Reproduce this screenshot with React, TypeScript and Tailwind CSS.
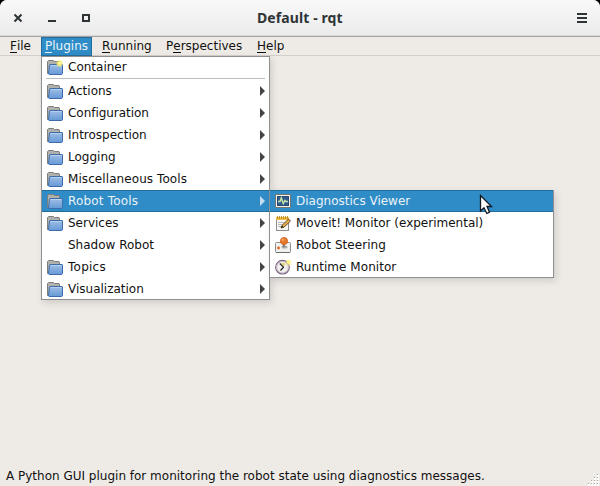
import type { ReactNode } from "react";

function FolderIcon({ fresh }: { fresh?: boolean }) {
  return (
    <svg width="16" height="16" viewBox="0 0 16 16">
      <defs>
        <linearGradient id="folder" x1="0" y1="0" x2="0" y2="1">
          <stop offset="0" stopColor="#a0bfe6" />
          <stop offset="1" stopColor="#6699d6" />
        </linearGradient>
        <radialGradient id="glow">
          <stop offset="0" stopColor="#ffffe0" />
          <stop offset="0.4" stopColor="#f8ed65" />
          <stop offset="1" stopColor="#f0df50" stopOpacity="0" />
        </radialGradient>
      </defs>
      <path d="M.5 14.5V2.5L1.5 1.5H6.5L7.5 2.5H12L12.5 3V14.5Z" fill="#b0b1ac" stroke="#7d7e7a" />
      <path d="M3 5.5H15.2L15.5 6V14.5L14.8 15.5H2L1.5 14.5L2.5 6Z" fill="url(#folder)" stroke="#3c6cac" />
      <path d="M3.6 6.5H14.5" stroke="#b9d0ec" />
      {fresh && <circle cx="12.5" cy="4.5" r="4" fill="url(#glow)" />}
    </svg>
  );
}

function DiagnosticsIcon() {
  return (
    <svg width="16" height="16" viewBox="0 0 16 16">
      <rect x=".5" y="1.5" width="15" height="13" rx=".5" fill="#f5f4ee" stroke="#77756b" />
      <rect x="2.5" y="3.5" width="11" height="9" fill="#315b8c" stroke="#254972" />
      <path d="M3 8.5H5L6.3 5L8.3 10.5L10 7.5L11 8.5H13" fill="none" stroke="#c4e2a8" strokeWidth="1.5" />
    </svg>
  );
}

function NotepadIcon() {
  return (
    <svg width="16" height="16" viewBox="0 0 16 16">
      <rect x="1.5" y="2.5" width="12" height="13" fill="#f7f7f5" stroke="#8c8c88" />
      <rect x="1" y="2" width="13" height="3" fill="#f1c34a" />
      <path d="M2.5 1V4M4.5 1V4M6.5 1V4M8.5 1V4M10.5 1V4M12.5 1V4" stroke="#b97b18" strokeWidth=".8" />
      <path d="M3 7.5H9M3 9.5H7M3 11.5H6" stroke="#b8b8b8" />
      <path d="M6 13L7 10.4L13.5 4L15.5 6L9 12.2Z" fill="#e5ad49" stroke="#594020" strokeWidth=".9" />
      <path d="M6 13L7 10.6L8.5 12Z" fill="#222" />
    </svg>
  );
}

function SteeringIcon() {
  return (
    <svg width="16" height="16" viewBox="0 0 16 16">
      <rect x=".5" y="5.5" width="15" height="10" rx="1" fill="#f1f1ef" stroke="#8d8d89" />
      <path d="M1 15.5H15" stroke="#6d6d69" />
      <ellipse cx="9.5" cy="10" rx="3" ry="1.6" fill="#aaa" />
      <path d="M8.8 5V10" stroke="#777" strokeWidth="2" />
      <circle cx="9" cy="4" r="3.6" fill="#e3782c" stroke="#d3651f" strokeWidth=".8" />
      <circle cx="8" cy="2.8" r="1.3" fill="#f7a45f" />
      <circle cx="3.5" cy="11" r="1.4" fill="#e36218" />
    </svg>
  );
}

function ClockIcon() {
  return (
    <svg width="16" height="16" viewBox="0 0 16 16">
      <circle cx="7.5" cy="8.2" r="6.8" fill="#f2f1ef" stroke="#75627d" strokeWidth="1.2" />
      <circle cx="7.5" cy="8.2" r="5.8" fill="none" stroke="#c4b6c9" strokeWidth="1" />
      <path d="M7.5 8.5L6 4A5 5 0 0 1 11 5Z" fill="#ddd58d" />
      <path d="M4.8 4.5L8.5 8.2L5.5 11.5" fill="none" stroke="#242424" strokeWidth="1.2" />
      <circle cx="13.5" cy="3.5" r="3" fill="#f8ed65" opacity=".45" />
      <path d="M13.5 1L14.2 2.8L16 3.5L14.2 4.2L13.5 6L12.8 4.2L11 3.5L12.8 2.8Z" fill="#fff27a" />
    </svg>
  );
}

type ItemProps = { icon?: ReactNode; label: string; width: string; arrow?: boolean; selected?: boolean };

function Item({ icon, label, width, arrow, selected }: ItemProps) {
  return (
    <div className={`flex h-[22px] shrink-0 items-center pr-1 pl-[5px] ${selected ? "bg-[#308cc6] text-[#eaf3fa] shadow-[inset_0_1px_#236d9d,inset_0_-1px_#236d9d]" : ""}`}>
      <span className="mr-[5px] h-4 w-4 shrink-0">{icon}</span>
      <Label text={label} width={width} />
      {arrow && (
        <svg className="ml-auto" width="5" height="10" viewBox="0 0 5 10">
          <path d="M0 0L5 5L0 10Z" fill={selected ? "#c3def0" : "#444"} />
        </svg>
      )}
    </div>
  );
}

/* Text set to a fixed advance, with an optional mnemonic underline. */
function Label({ text, width, mnemonic }: { text: string; width: string; mnemonic?: number }) {
  return (
    <span className={`block shrink-0 whitespace-nowrap ${width}`}>
      {mnemonic === undefined ? text : (
        <>
          {text.slice(0, mnemonic)}
          <span className="inline-block h-[15px] border-b border-current leading-[16px]">{text[mnemonic]}</span>
          {text.slice(mnemonic + 1)}
        </>
      )}
    </span>
  );
}

const plugins: ItemProps[] = [
  { label: "Actions", width: "w-[44px]" },
  { label: "Configuration", width: "w-[81px] tracking-[-0.04px]" },
  { label: "Introspection", width: "w-[79px]" },
  { label: "Logging", width: "w-[48px]" },
  { label: "Miscellaneous Tools", width: "w-[120px] tracking-[0.08px]" },
  { label: "Robot Tools", width: "w-[71px] tracking-[0.18px]", selected: true },
  { label: "Services", width: "w-[50px]" },
  { label: "Shadow Robot", width: "w-[87px]" },
  { label: "Topics", width: "w-[39px] tracking-[0.25px]" },
  { label: "Visualization", width: "w-[76px]" },
];

export default function App() {
  return (
    <div className="h-[486px] w-[600px] overflow-hidden bg-black">
      <div className="relative flex h-full flex-col overflow-hidden rounded-t-[7px] bg-[#eeebe7] font-['DejaVu_Sans',sans-serif] text-[12px] leading-[16px] text-[#111]">
        <header className="flex h-[37px] shrink-0 items-center border-b border-[#a1a1a1] bg-linear-to-b from-[#f9f9f9] to-[#ebebeb] px-[12px] shadow-[inset_0_-1px_#d9d9d9]">
          <svg width="80" height="12" viewBox="0 0 80 12" className="text-[#2e3436]" fill="none" stroke="currentColor" strokeWidth="2">
            <path d="M2.5 2.5L9.5 9.5M9.5 2.5L2.5 9.5" />
            <path d="M36 9H44" />
            <path d="M71 3H77V9H71Z" />
          </svg>
          <h1 className="ml-[165px] w-[90px] font-['Noto_Sans',sans-serif] text-[14px] leading-5 font-bold tracking-[0.1px] whitespace-nowrap text-[#2e3436]">Default - rqt</h1>
          <svg width="10" height="10" viewBox="0 0 10 10" className="ml-auto mr-[1px]">
            <path d="M0 1H10M0 5H10M0 9H10" stroke="#2e3436" strokeWidth="2" />
          </svg>
        </header>
        <nav className="flex h-[19px] shrink-0 items-center border-b border-[#d2cfcc] pl-[6px]">
          <div className="px-1"><Label text="File" width="w-[21px]" mnemonic={0} /></div>
          <div className="ml-[6px] flex h-[19px] w-[51px] items-center border border-[#236d9d] bg-[#308cc6] pl-[3px] text-[#eaf3fa]"><Label text="Plugins" width="w-[43px]" mnemonic={0} /></div>
          <div className="ml-[10px]"><Label text="Running" width="w-[50px]" mnemonic={0} /></div>
          <div className="ml-[14px]"><Label text="Perspectives" width="w-[77px]" mnemonic={1} /></div>
          <div className="ml-[14px]"><Label text="Help" width="w-[28px]" mnemonic={0} /></div>
        </nav>
        <main className="flex-1" />
        <footer className="flex h-[22px] shrink-0 items-center justify-between pl-[6px]">
          <span className="pt-[2px] whitespace-nowrap">A Python GUI plugin for monitoring the robot state using diagnostics messages.</span>
          <svg width="14" height="14" viewBox="0 0 14 14" className="self-end" shapeRendering="crispEdges">
            {[[10, 2], [7, 5], [10, 5], [4, 8], [7, 8], [10, 8], [1, 11], [4, 11], [7, 11], [10, 11]].map(([x, y]) => (
              <g key={`${x}-${y}`}>
                <rect x={x + 1} y={y + 1} width="2" height="2" fill="#fff" />
                <rect x={x + 1} y={y} width="1" height="1" fill="#aaa69f" />
              </g>
            ))}
          </svg>
        </footer>

        <div className="absolute top-[56px] left-[41px] flex h-[244px] w-[229px] flex-col overflow-hidden border border-[#8f8f8f] bg-white shadow-[2px_3px_7px_#0002]">
          <div className="h-[21px] shrink-0"><div className="-mt-px"><Item label="Container" width="w-[59px]" icon={<FolderIcon fresh />} /></div></div>
          <div className="mx-1 mb-[1px] h-px shrink-0 bg-[#bdbdbd]" />
          {plugins.map((item) => (
            <Item key={item.label} {...item} arrow icon={item.label === "Shadow Robot" ? undefined : <FolderIcon />} />
          ))}
        </div>
        <div className="absolute top-[190px] left-[269px] flex h-[88px] w-[285px] flex-col overflow-hidden border border-t-0 border-[#8f8f8f] bg-white shadow-[2px_3px_7px_#0002]">
          <Item selected label="Diagnostics Viewer" width="w-[115px]" icon={<DiagnosticsIcon />} />
          <Item label="Moveit! Monitor (experimental)" width="w-[188px]" icon={<NotepadIcon />} />
          <Item label="Robot Steering" width="w-[90px] tracking-[0.05px]" icon={<SteeringIcon />} />
          <Item label="Runtime Monitor" width="w-[101px] tracking-[0.05px]" icon={<ClockIcon />} />
        </div>
        <svg className="absolute top-[194px] left-[479px]" width="15" height="22" viewBox="0 0 15 22">
          <path d="M1.5 1.5V17L5 13.8L7.8 19.5L10.5 18.2L8 12.5H12.5Z" fill="#fff" stroke="#101820" strokeWidth="1.3" />
        </svg>
      </div>
    </div>
  );
}
